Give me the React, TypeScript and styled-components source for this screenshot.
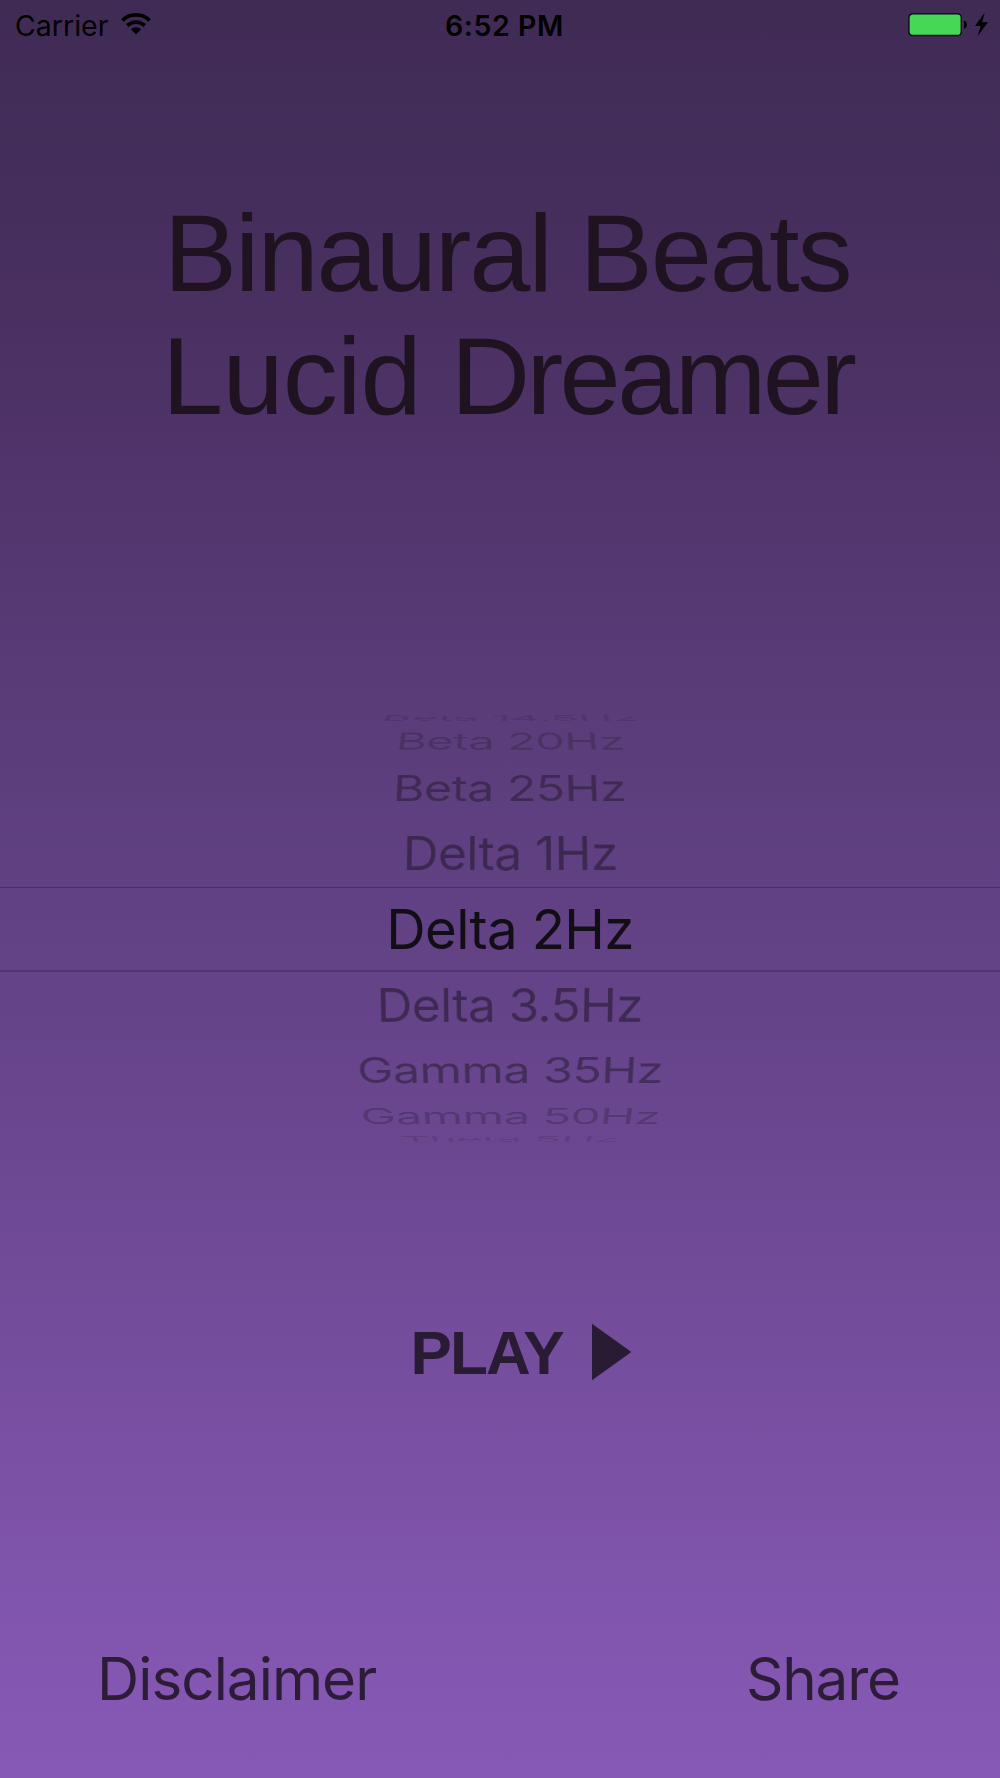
import React from "react";
import styled, { createGlobalStyle } from "styled-components";

const system = `Inter, "Liberation Sans", sans-serif`;
const helvetica = `"Liberation Sans", Arial, sans-serif`;

const GlobalStyle = createGlobalStyle`
  body { margin: 0; }
`;

const Screen = styled.main`
  box-sizing: border-box;
  width: 1000px;
  height: 1778px;
  overflow: hidden;
  display: flex;
  flex-direction: column;
  font-family: ${system};
  background: linear-gradient(
    #402b55 0,
    #452e5c 210px,
    #4f3369 440px,
    #5a3c79 700px,
    #634286 960px,
    #6b4791 1150px,
    #754d9d 1350px,
    #8256af 1640px,
    #8659b6 1778px
  );
`;

const StatusBar = styled.header`
  height: 50px;
  flex: none;
  box-sizing: border-box;
  padding: 0 12px 0 15px;
  display: grid;
  grid-template-columns: 429.9px 1fr auto;
  font-size: 28.5px;
  line-height: 52px;
  color: #000;
`;

const CarrierGroup = styled.div`
  height: 50px;
  display: flex;
  align-items: flex-start;
  gap: 11.6px;

  svg {
    margin-top: 12px;
  }
`;

const Clock = styled.div`
  font-weight: 600;
  letter-spacing: 0.6px;
`;

const PowerGroup = styled.div`
  height: 50px;
  display: flex;
  align-items: center;
`;

const Title = styled.h1`
  flex: none;
  margin: 141px 0 0;
  padding-left: 162px;
  font-family: ${helvetica};
  font-size: 110px;
  font-weight: 400;
  line-height: 123.3px;
  letter-spacing: -2.05px;
  color: #1f1321;
`;

const TitleLine = styled.span<{ $indent?: number }>`
  display: block;
  white-space: nowrap;
  padding-left: ${(p) => p.$indent ?? 0}px;
`;

const Tracked = styled.span<{ $spacing: number }>`
  letter-spacing: ${(p) => p.$spacing}px;
`;

const Picker = styled.ul`
  flex: none;
  list-style: none;
  margin: 272.4px 0 0;
  padding: 0;
`;

const PickerRow = styled.li<{ $height: number; $selected?: boolean }>`
  box-sizing: border-box;
  height: ${(p) => p.$height}px;
  padding-left: 20px;
  display: flex;
  align-items: center;
  justify-content: center;
  ${(p) =>
    p.$selected &&
    `
    box-shadow: inset 0 1px rgba(0, 0, 0, 0.26), inset 0 -1px rgba(0, 0, 0, 0.17), 0 1px rgba(0, 0, 0, 0.17);
  `}
`;

interface Tone {
  $sx: number;
  $sy: number;
  $tilt: number;
  $alpha: number;
}

const PickerLabel = styled.span<Tone>`
  flex: none;
  font-size: 54.6px;
  line-height: 66px;
  letter-spacing: -0.65px;
  white-space: nowrap;
  color: rgba(0, 0, 0, ${(p) => p.$alpha});
  transform: scale(${(p) => p.$sx}, ${(p) => p.$sy})
    matrix3d(1, 0, 0, 0, 0, 1, 0, ${(p) => p.$tilt}, 0, 0, 1, 0, 0, 0, 0, 1);
`;

const SelectedLabel = styled.span`
  font-size: 54.6px;
  line-height: 66px;
  letter-spacing: -0.65px;
  color: #120e16;
`;

const PlayButton = styled.button`
  flex: none;
  margin: 169.8px 0 0;
  padding: 0 0 0 410.6px;
  height: 72px;
  border: 0;
  background: none;
  display: flex;
  align-items: center;
  gap: 29px;
  font-family: ${helvetica};
  font-size: 62px;
  font-weight: 700;
  line-height: 72px;
  letter-spacing: -1.9px;
  color: #2a1b35;
`;

const PlayLabel = styled.span`
  padding-top: 2px;
`;

const Footer = styled.footer`
  flex: none;
  margin-top: 256px;
  padding: 0 100px 0 97px;
  display: flex;
  justify-content: space-between;
`;

const FooterButton = styled.button<{ $spacing: number }>`
  padding: 0;
  border: 0;
  background: none;
  font-family: ${system};
  font-size: 58.4px;
  line-height: 70px;
  letter-spacing: ${(p) => p.$spacing}px;
  color: #2c1c38;
`;

const WifiIcon = () => (
  <svg width="32" height="24" viewBox="0 0 32 24" fill="none" stroke="#000">
    <path d="M2.3 8.6A19.4 19.4 0 0 1 29.7 8.6" strokeWidth="3.8" />
    <path d="M7.2 13.7A12.4 12.4 0 0 1 24.8 13.7" strokeWidth="3.8" />
    <path d="M16 22.5L10.9 17.3A7.2 7.2 0 0 1 21.1 17.3Z" fill="#000" stroke="none" />
  </svg>
);

const BatteryIcon = () => (
  <svg width="81" height="26" viewBox="0 0 81 26">
    <rect x="1.9" y="1.9" width="52.4" height="21.6" rx="3.8" fill="#45d755" stroke="#0a0710" strokeWidth="1.4" />
    <path d="M57 8.6C59.2 9.4 60 11 60 12.8S59.2 16.2 57 17Z" fill="#000" />
    <path d="M77.7 0.8L68 14H73.7L70.6 24L81 10.2H75.1Z" fill="#000" />
  </svg>
);

const PlayIcon = () => (
  <svg width="40" height="58" viewBox="0 0 40 58">
    <path d="M0 0.7L39.4 29L0 57.3Z" fill="#2a1b35" />
  </svg>
);

interface Frequency {
  label: string;
  height: number;
  sx: number;
  sy: number;
  tilt: number;
  alpha: number;
  selected?: boolean;
}

const frequencies: Frequency[] = [
  { label: "Beta 14.5Hz", height: 16.4, sx: 0.855, sy: 0.131, tilt: -0.0006, alpha: 0.12 },
  { label: "Beta 20Hz", height: 30.2, sx: 0.862, sy: 0.428, tilt: -0.0005, alpha: 0.19 },
  { label: "Beta 25Hz", height: 62.8, sx: 0.886, sy: 0.655, tilt: -0.0003, alpha: 0.33 },
  { label: "Delta 1Hz", height: 67.6, sx: 0.909, sy: 0.849, tilt: -0.00013, alpha: 0.38 },
  { label: "Delta 2Hz", height: 84, sx: 1, sy: 1, tilt: 0, alpha: 1, selected: true },
  { label: "Delta 3.5Hz", height: 68.4, sx: 0.907, sy: 0.84, tilt: 0.00013, alpha: 0.4 },
  { label: "Gamma 35Hz", height: 61.2, sx: 0.889, sy: 0.65, tilt: 0.0003, alpha: 0.35 },
  { label: "Gamma 50Hz", height: 31.2, sx: 0.869, sy: 0.41, tilt: 0.0005, alpha: 0.2 },
  { label: "Theta 5Hz", height: 14.4, sx: 0.836, sy: 0.128, tilt: 0.0006, alpha: 0.12 },
];

export default function App() {
  return (
    <>
      <GlobalStyle />
      <Screen>
        <StatusBar>
          <CarrierGroup>
            <span>Carrier</span>
            <WifiIcon />
          </CarrierGroup>
          <Clock>6:52 PM</Clock>
          <PowerGroup>
            <BatteryIcon />
          </PowerGroup>
        </StatusBar>
        <Title>
          <TitleLine $indent={1.7}>Binaural Beats</TitleLine>
          <TitleLine>
            <Tracked $spacing={-0.8}>Lucid </Tracked>
            <Tracked $spacing={-3.6}>Dreamer</Tracked>
          </TitleLine>
        </Title>
        <Picker>
          {frequencies.map((f) => (
            <PickerRow key={f.label} $height={f.height} $selected={f.selected}>
              {f.selected ? (
                <SelectedLabel>{f.label}</SelectedLabel>
              ) : (
                <PickerLabel $sx={f.sx} $sy={f.sy} $tilt={f.tilt} $alpha={f.alpha}>
                  {f.label}
                </PickerLabel>
              )}
            </PickerRow>
          ))}
        </Picker>
        <PlayButton>
          <PlayLabel>PLAY</PlayLabel>
          <PlayIcon />
        </PlayButton>
        <Footer>
          <FooterButton $spacing={-0.95}>Disclaimer</FooterButton>
          <FooterButton $spacing={-1.15}>Share</FooterButton>
        </Footer>
      </Screen>
    </>
  );
}
